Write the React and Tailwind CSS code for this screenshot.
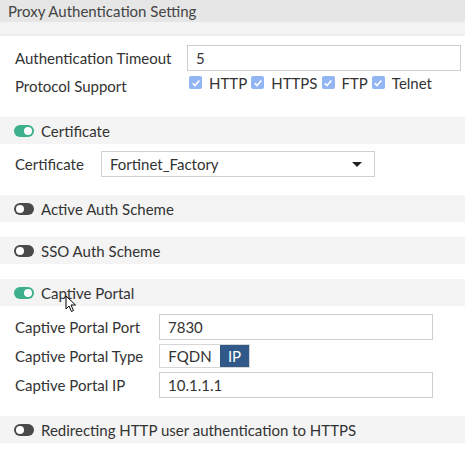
import React from 'react';

function Toggle({ on }) {
  return (
    <span
      className={`relative inline-block w-[20px] h-[12px] rounded-full ${on ? 'bg-[#3db08b]' : 'bg-[#4a4a4a]'}`}
    >
      <span
        className={`absolute top-[2px] w-[8px] h-[8px] rounded-full bg-white ${on ? 'right-[2px]' : 'left-[2px]'}`}
      />
    </span>
  );
}

function Band({ on, children }) {
  return (
    <div className="h-[27px] bg-[#f4f4f4] flex items-center gap-[7px] pl-[14px]">
      <Toggle on={on} />
      <span>{children}</span>
    </div>
  );
}

function Check({ label }) {
  return (
    <span className="flex items-center gap-[7px] mr-[4px]">
      <span className="w-[13px] h-[13px] rounded-[2px] bg-[#92b5f4] flex items-center justify-center">
        <svg viewBox="0 0 12 12" className="w-[10px] h-[10px]">
          <path d="M2 6.3 L4.8 9 L10 3" fill="none" stroke="white" strokeWidth="2" />
        </svg>
      </span>
      <span>{label}</span>
    </span>
  );
}

function TextInput({ value, width }) {
  return (
    <div className={`h-[26px] ${width} border border-[#cfcfcf] bg-white flex items-center pl-[8px]`}>
      {value}
    </div>
  );
}

export default function App() {
  return (
    <div className="w-[465px] h-[451px] bg-white text-[#333] text-[15px] leading-[20px] font-['Lato','Open_Sans',sans-serif] overflow-hidden relative">
      <div className="h-[22px] bg-[#e6e6e6] flex items-center pl-[8px] text-[#444]">Proxy Authentication Setting</div>
      <div className="h-[14px] bg-[#f3f3f3]" />

      <div className="h-[81px] bg-white shadow-[0_-1px_2px_rgba(0,0,0,0.06)] pt-[9px]">
        <div className="flex items-center">
          <span className="w-[187px] pl-[15px]">Authentication Timeout</span>
          <TextInput value="5" width="w-[274px]" />
        </div>
        <div className="flex mt-[4px]">
          <span className="w-[189px] pl-[15px] mt-[1px]">Protocol Support</span>
          <div className="flex items-center h-[15px]">
            <Check label="HTTP" />
            <Check label="HTTPS" />
            <Check label="FTP" />
            <Check label="Telnet" />
          </div>
        </div>
      </div>

      <Band on>Certificate</Band>
      <div className="h-[51px] pt-[7px]">
        <div className="flex items-center">
          <span className="w-[101px] pl-[15px]">Certificate</span>
          <div className="h-[26px] w-[274px] border border-[#cfcfcf] flex items-center justify-between pl-[8px] pr-[12px]">
            <span>Fortinet_Factory</span>
            <span className="w-0 h-0 border-l-[5px] border-r-[5px] border-t-[5px] border-l-transparent border-r-transparent border-t-[#222]" />
          </div>
        </div>
      </div>

      <Band>Active Auth Scheme</Band>
      <div className="h-[15px]" />
      <Band>SSO Auth Scheme</Band>
      <div className="h-[15px]" />
      <Band on>Captive Portal</Band>

      <div className="h-[110px] pt-[8px] flex flex-col gap-[4px]">
        <div className="flex items-center">
          <span className="w-[159px] pl-[15px]">Captive Portal Port</span>
          <TextInput value="7830" width="w-[274px]" />
        </div>
        <div className="flex items-center">
          <span className="w-[159px] pl-[15px]">Captive Portal Type</span>
          <div className="flex h-[24px] border border-[#d6d6d6]">
            <span className="w-[60px] flex items-center justify-center">FQDN</span>
            <span className="w-[29px] flex items-center justify-center bg-[#30598a] text-white">IP</span>
          </div>
        </div>
        <div className="flex items-center">
          <span className="w-[159px] pl-[15px]">Captive Portal IP</span>
          <TextInput value="10.1.1.1" width="w-[274px]" />
        </div>
      </div>

      <Band>Redirecting HTTP user authentication to HTTPS</Band>

      <svg className="absolute left-[65px] top-[295px]" width="12" height="18" viewBox="0 0 12 18">
        <path d="M1 1 L1 14 L4 11 L6.5 16.5 L8.5 15.5 L6 10 L10.5 10 Z" fill="white" stroke="black" strokeWidth="1" strokeLinejoin="round" />
      </svg>
    </div>
  );
}
